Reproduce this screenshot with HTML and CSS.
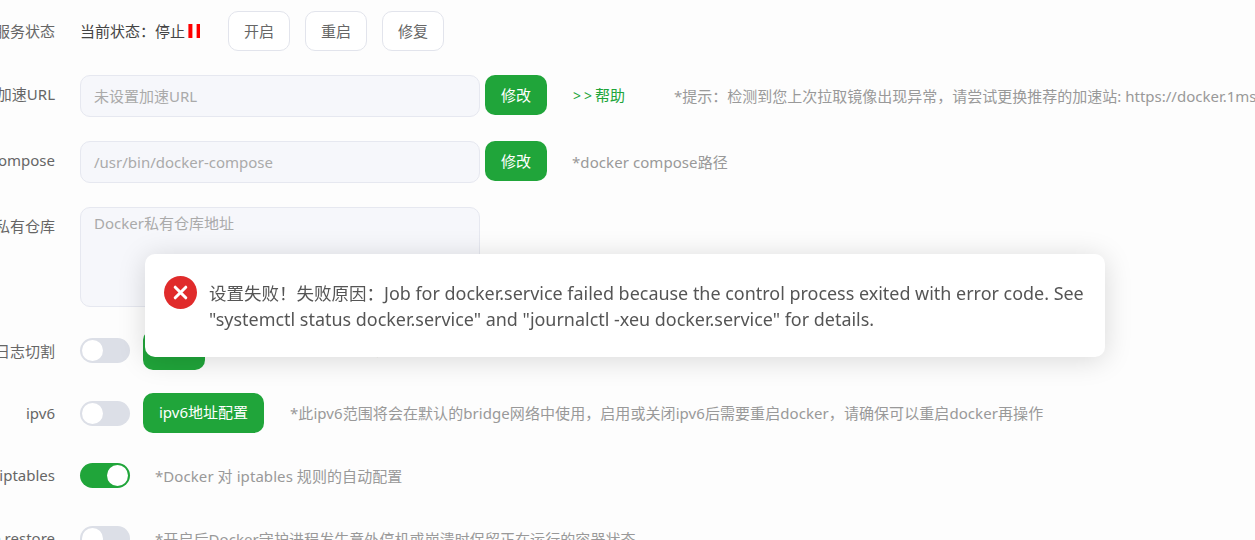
FILE: index.html
```html
<!DOCTYPE html>
<html lang="zh-CN">
<head>
<meta charset="utf-8">
<title>Docker 设置</title>
<link rel="stylesheet" href="styles.css">
</head>
<body>
<main class="form">
  <div class="row row-status">
    <div class="label">服务状态</div>
    <div class="status">当前状态：停止<svg class="pause" width="16" height="16" viewBox="0 0 16 16"><rect x="2.4" y="2" width="4" height="14" fill="#f00"/><rect x="10.6" y="2" width="3.4" height="14" fill="#f00"/></svg></div>
    <button class="btn-plain">开启</button>
    <button class="btn-plain">重启</button>
    <button class="btn-plain">修复</button>
  </div>
  <div class="row row-input">
    <div class="label label-high">加速URL</div>
    <div class="field placeholder">未设置加速URL</div>
    <button class="btn-green btn-side">修改</button>
    <a class="help"><span class="help-arrows">&gt;&gt;</span>帮助</a>
    <span class="hint hint-far">*提示：检测到您上次拉取镜像出现异常，请尝试更换推荐的加速站: https://docker.1ms.run</span>
  </div>
  <div class="row row-input">
    <div class="label label-high">docker-compose</div>
    <div class="field placeholder">/usr/bin/docker-compose</div>
    <button class="btn-green btn-side">修改</button>
    <span class="hint">*docker compose路径</span>
  </div>
  <div class="row row-area">
    <div class="label label-top">私有仓库</div>
    <div class="area placeholder">Docker私有仓库地址</div>
  </div>
  <div class="row row-switch">
    <div class="label">日志切割</div>
    <span class="switch"><i class="knob"></i></span>
    <button class="btn-green btn-config btn-log">配置</button>
    <span class="hint hint-config hint-log">*限制容器日志的大小，避免磁盘满</span>
  </div>
  <div class="row row-switch">
    <div class="label">ipv6</div>
    <span class="switch"><i class="knob"></i></span>
    <button class="btn-green btn-config">ipv6地址配置</button>
    <span class="hint hint-config">*此ipv6范围将会在默认的bridge网络中使用，启用或关闭ipv6后需要重启docker，请确保可以重启docker再操作</span>
  </div>
  <div class="row row-switch">
    <div class="label">iptables</div>
    <span class="switch switch-on"><i class="knob"></i></span>
    <span class="hint">*Docker 对 iptables 规则的自动配置</span>
  </div>
  <div class="row row-switch">
    <div class="label">live restore</div>
    <span class="switch"><i class="knob"></i></span>
    <span class="hint">*开启后Docker守护进程发生意外停机或崩溃时保留正在运行的容器状态</span>
  </div>
</main>
<div class="toast" role="alert">
  <svg class="toast-icon" width="33" height="33" viewBox="0 0 33 33"><circle cx="16.5" cy="16.5" r="16.5" fill="#e02b2b"/><path d="M11.2 11.2 21.8 21.8M21.8 11.2 11.2 21.8" stroke="#fff" stroke-width="3" stroke-linecap="round"/></svg>
  <p class="toast-text">设置失败！失败原因：<span class="toast-latin">Job for docker.service failed because the control process exited with error code. See "systemctl status docker.service" and "journalctl -xeu docker.service" for details.</span></p>
</div>
</body>
</html>
```
FILE: styles.css
```css
html, body {
  margin: 0;
  height: 100%;
  overflow: hidden;
  background: #fdfdfd;
}
body {
  font-family: "Noto Sans", "Noto Sans CJK SC", sans-serif;
  font-size: 15px;
  color: #666;
}
.form {
  display: flex;
  flex-direction: column;
  gap: 24px;
  padding-top: 11px;
}
.row {
  display: flex;
  align-items: center;
  white-space: nowrap;
}
.row-status { height: 40px; }
.row-input { height: 42px; }
.row-area { height: 100px; align-items: flex-start; }
.row-switch { height: 38.6px; }
.label {
  flex: none;
  width: 55px;
  margin-right: 25px;
  padding-bottom: 2px;
  display: flex;
  justify-content: flex-end;
  color: #666;
}
.label-high { padding-bottom: 5px; }
.label-top { padding-top: 8px; }
.row-switch .label { padding-bottom: 0; }
.status {
  display: flex;
  align-items: center;
  width: 148px;
  padding-bottom: 2px;
  color: #444;
}
.pause { margin-left: 1px; }
button {
  font: inherit;
  cursor: pointer;
  flex: none;
}
.btn-plain {
  width: 62px;
  height: 40px;
  margin-right: 15px;
  border: 1px solid #e2e4ec;
  border-radius: 10px;
  background: #fff;
  color: #666;
  padding: 0 0 2px;
}
.btn-green {
  height: 40px;
  border: 0;
  border-radius: 10px;
  background: #20a53a;
  color: #fff;
  padding: 0 16px 2px;
}
.btn-side {
  width: 62px;
  margin-left: 5px;
  padding: 0 0 2px;
  align-self: flex-start;
}
.btn-config { margin-left: 13px; min-width: 62px; }
.btn-log { padding-bottom: 8px; }
.field, .area {
  flex: none;
  box-sizing: border-box;
  width: 400px;
  background: #f6f7fb;
  border: 1px solid #e6e8f0;
  border-radius: 10px;
  padding: 0 13px;
}
.field {
  height: 42px;
  padding-bottom: 1px;
  display: flex;
  align-items: center;
}
.area {
  height: 100px;
  padding-top: 4px;
}
.placeholder { color: #aaa; }
.help {
  margin-left: 26px;
  padding-bottom: 3px;
  color: #20a53a;
}
.help-arrows { letter-spacing: 3px; font-size: 14px; }
.hint {
  color: #999;
  margin-left: 25px;
  padding-bottom: 2px;
  letter-spacing: 0.07px;
}
.row-switch .hint { padding-bottom: 0; }
.hint-far { margin-left: 49px; letter-spacing: 0; }
.hint-config { margin-left: 26px; }
.row-switch .hint-log { padding-bottom: 4px; }
.switch {
  flex: none;
  box-sizing: border-box;
  width: 50px;
  height: 25px;
  margin-top: 1px;
  padding: 2px;
  border-radius: 13px;
  background: #dcdfe7;
  display: flex;
}
.switch-on {
  background: #20a53a;
  justify-content: flex-end;
}
.knob {
  width: 21px;
  height: 21px;
  border-radius: 50%;
  background: #fff;
}
.toast {
  position: fixed;
  left: 145px;
  top: 254px;
  width: 960px;
  height: 103px;
  box-sizing: border-box;
  padding: 0 19px;
  display: flex;
  align-items: center;
  gap: 12px;
  background: #fff;
  border-radius: 10px;
  box-shadow: 0 3px 28px rgba(0, 0, 0, 0.15);
}
.toast-icon { flex: none; margin-top: -26px; }
.toast-text {
  margin: 0;
  font-size: 17.5px;
  line-height: 26px;
  color: #555;
}
.toast-latin { font-size: 17.95px; }
```
